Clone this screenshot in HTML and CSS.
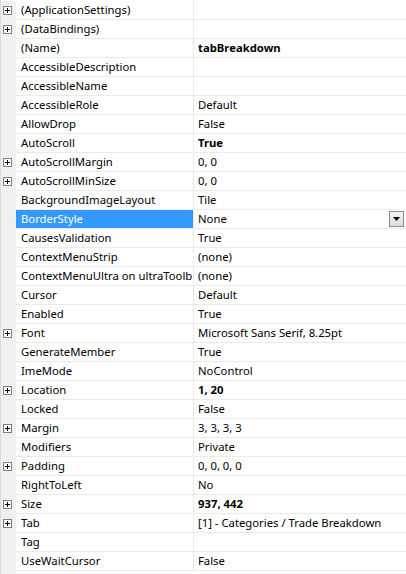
FILE: index.html
```html
<!DOCTYPE html>
<html>
<head>
<meta charset="utf-8">
<link rel="stylesheet" href="styles.css">
</head>
<body>
<div class="grid">
  <div class="row"><div class="margin"><span class="plus"></span></div><div class="name">(ApplicationSettings)</div><div class="value"></div></div>
  <div class="row"><div class="margin"><span class="plus"></span></div><div class="name">(DataBindings)</div><div class="value"></div></div>
  <div class="row"><div class="margin"></div><div class="name">(Name)</div><div class="value bold">tabBreakdown</div></div>
  <div class="row"><div class="margin"></div><div class="name">AccessibleDescription</div><div class="value"></div></div>
  <div class="row"><div class="margin"></div><div class="name">AccessibleName</div><div class="value"></div></div>
  <div class="row"><div class="margin"></div><div class="name">AccessibleRole</div><div class="value">Default</div></div>
  <div class="row"><div class="margin"></div><div class="name">AllowDrop</div><div class="value">False</div></div>
  <div class="row"><div class="margin"></div><div class="name">AutoScroll</div><div class="value bold">True</div></div>
  <div class="row"><div class="margin"><span class="plus"></span></div><div class="name">AutoScrollMargin</div><div class="value">0, 0</div></div>
  <div class="row"><div class="margin"><span class="plus"></span></div><div class="name">AutoScrollMinSize</div><div class="value">0, 0</div></div>
  <div class="row"><div class="margin"></div><div class="name">BackgroundImageLayout</div><div class="value">Tile</div></div>
  <div class="row selected"><div class="margin"></div><div class="name">BorderStyle</div><div class="value">None<span class="drop"><svg width="7" height="4" viewBox="0 0 7 4"><path d="M0 0H7L3.5 4Z" fill="#000"/></svg></span></div></div>
  <div class="row"><div class="margin"></div><div class="name">CausesValidation</div><div class="value">True</div></div>
  <div class="row"><div class="margin"></div><div class="name">ContextMenuStrip</div><div class="value">(none)</div></div>
  <div class="row"><div class="margin"></div><div class="name">ContextMenuUltra on ultraToolb</div><div class="value">(none)</div></div>
  <div class="row"><div class="margin"></div><div class="name">Cursor</div><div class="value">Default</div></div>
  <div class="row"><div class="margin"></div><div class="name">Enabled</div><div class="value">True</div></div>
  <div class="row"><div class="margin"><span class="plus"></span></div><div class="name">Font</div><div class="value">Microsoft Sans Serif, 8.25pt</div></div>
  <div class="row"><div class="margin"></div><div class="name">GenerateMember</div><div class="value">True</div></div>
  <div class="row"><div class="margin"></div><div class="name">ImeMode</div><div class="value">NoControl</div></div>
  <div class="row"><div class="margin"><span class="plus"></span></div><div class="name">Location</div><div class="value bold">1, 20</div></div>
  <div class="row"><div class="margin"></div><div class="name">Locked</div><div class="value">False</div></div>
  <div class="row"><div class="margin"><span class="plus"></span></div><div class="name">Margin</div><div class="value">3, 3, 3, 3</div></div>
  <div class="row"><div class="margin"></div><div class="name">Modifiers</div><div class="value">Private</div></div>
  <div class="row"><div class="margin"><span class="plus"></span></div><div class="name">Padding</div><div class="value">0, 0, 0, 0</div></div>
  <div class="row"><div class="margin"></div><div class="name">RightToLeft</div><div class="value">No</div></div>
  <div class="row"><div class="margin"><span class="plus"></span></div><div class="name">Size</div><div class="value bold">937, 442</div></div>
  <div class="row"><div class="margin"><span class="plus"></span></div><div class="name">Tab</div><div class="value">[1] - Categories / Trade Breakdown</div></div>
  <div class="row"><div class="margin"></div><div class="name">Tag</div><div class="value"></div></div>
  <div class="row"><div class="margin"></div><div class="name">UseWaitCursor</div><div class="value">False</div></div>
  <div class="row filler"><div class="margin"></div><div class="rest"></div></div>
</div>
</body>
</html>
```

FILE: styles.css
```css
html, body {
  margin: 0;
  padding: 0;
  background: #ffffff;
}
.grid {
  width: 406px;
  height: 574px;
  box-sizing: border-box;
  padding-top: 1px;
  overflow: hidden;
  font-family: "Noto Sans", "Open Sans", sans-serif;
  font-size: 11.3px;
  color: #000;
  display: flex;
  flex-direction: column;
  border-left: 1px solid #dcdcdc;
}
.row {
  display: flex;
  height: 19px;
  flex: none;
}
.margin {
  width: 15px;
  flex: none;
  background: #f0f0f0;
  display: flex;
  align-items: center;
  justify-content: flex-start;
  padding-left: 2px;
  box-sizing: border-box;
}
.plus {
  position: relative;
  width: 9px;
  height: 9px;
  box-sizing: border-box;
  border: 1px solid #7f7f7f;
  background: #fff;
}
.plus::before {
  content: "";
  position: absolute;
  left: 1px;
  top: 3px;
  width: 5px;
  height: 1px;
  background: #000;
}
.plus::after {
  content: "";
  position: absolute;
  left: 3px;
  top: 1px;
  width: 1px;
  height: 5px;
  background: #000;
}
.name {
  width: 178px;
  flex: none;
  box-sizing: border-box;
  padding-left: 5px;
  border-right: 1px solid #ebebe6;
  border-bottom: 1px solid #ebebe6;
  white-space: nowrap;
  overflow: hidden;
  line-height: 18px;
}
.value {
  flex: 1;
  position: relative;
  padding-left: 4px;
  border-bottom: 1px solid #ebebe6;
  white-space: nowrap;
  overflow: hidden;
  line-height: 18px;
}
.bold {
  font-weight: bold;
}
.selected .name {
  background: #3399ff;
  color: #fff;
}
.drop {
  position: absolute;
  right: 2px;
  top: 1px;
  width: 15px;
  height: 16px;
  box-sizing: border-box;
  border: 1px solid #8a8a8a;
  background: linear-gradient(#f4f4f4, #dcdcdc);
  display: flex;
  align-items: center;
  justify-content: center;
}
.filler {
  flex: 1;
}
.rest {
  flex: 1;
}
```
